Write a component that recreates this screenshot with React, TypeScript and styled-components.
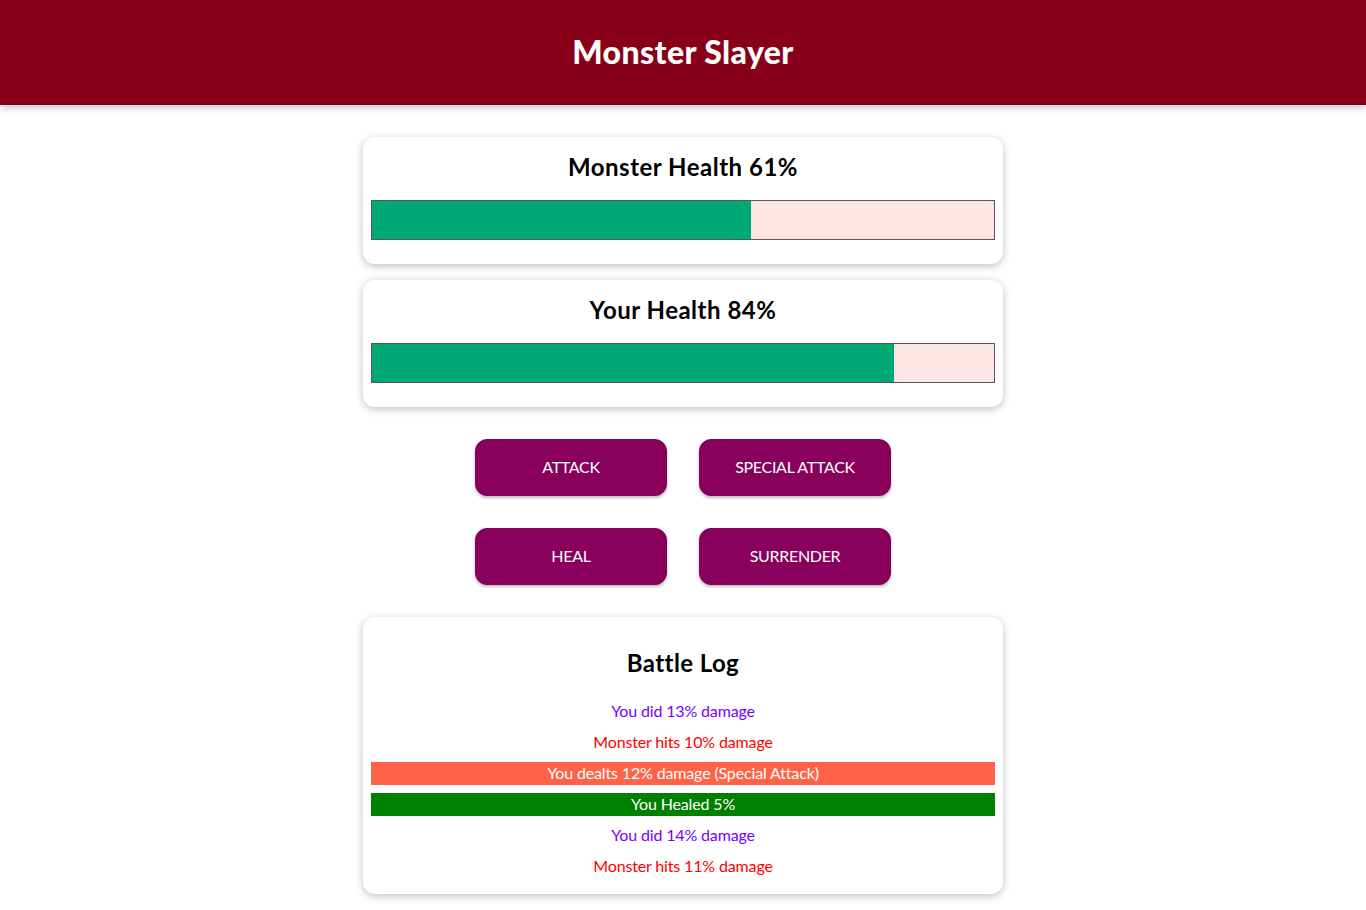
import React from 'react';
import styled, { createGlobalStyle } from 'styled-components';

const GlobalStyle = createGlobalStyle`
  * {
    box-sizing: border-box;
  }
  html {
    font-family: 'Lato', 'Noto Sans', sans-serif;
  }
  body {
    margin: 0;
    background: #ffffff;
  }
`;

const Header = styled.header`
  text-align: center;
  padding: 0.5rem;
  height: 105px;
  display: flex;
  align-items: center;
  justify-content: center;
  background-color: #880017;
  color: white;
  box-shadow: 0 2px 8px rgba(0, 0, 0, 0.26);
  margin-bottom: 2rem;
`;

const Title = styled.h1`
  margin: 0 0 2px;
  font-size: 32px;
  font-weight: 900;
  letter-spacing: 0.4px;
`;

const Section = styled.section`
  width: 90%;
  max-width: 40rem;
  margin: auto;
`;

const Container = styled.section`
  text-align: center;
  padding: 0.5rem;
  margin: 1rem auto;
  box-shadow: 0 2px 8px rgba(0, 0, 0, 0.26);
  border-radius: 12px;
  width: 90%;
  max-width: 40rem;
`;

const HealthTitle = styled.h2`
  margin: 0.25rem;
  font-size: 24px;
  line-height: 35px;
  font-weight: 700;
  letter-spacing: 0.5px;
`;

const HealthBar = styled.div`
  width: 100%;
  height: 40px;
  border: 1px solid #575757;
  margin: 1rem 0;
  background: #fde5e5;
`;

const HealthValue = styled.div`
  background-color: #00a876;
  height: 100%;
`;

const Controls = styled(Section)`
  display: flex;
  justify-content: center;
  flex-wrap: wrap;
`;

const Button = styled.button`
  font: inherit;
  font-size: 16px;
  line-height: 22px;
  border: 1px solid #88005b;
  background-color: #88005b;
  color: white;
  padding: 16px 2rem 17px;
  border-radius: 12px;
  margin: 1rem;
  width: 12rem;
  cursor: pointer;
  letter-spacing: -0.3px;
  box-shadow: 0 2px 3px rgba(0, 0, 0, 0.26);
`;

const LogTitle = styled.h2`
  margin: 20px 0;
  font-size: 24px;
  line-height: 35px;
  font-weight: 700;
  letter-spacing: 0.4px;
`;

const LogList = styled.ul`
  list-style: none;
  margin: 0;
  padding: 0;
`;

type Kind = 'player' | 'monster' | 'special' | 'heal';

const LogItem = styled.li<{ $kind: Kind }>`
  margin: 0.5rem 0;
  font-size: 16px;
  line-height: 22px;
  padding-bottom: 1px;
  font-weight: 400;
  letter-spacing: -0.15px;
  color: ${p =>
    p.$kind === 'player' ? '#7700ff' : p.$kind === 'monster' ? '#ff0000' : '#ffffff'};
  background: ${p =>
    p.$kind === 'special' ? '#ff6347' : p.$kind === 'heal' ? '#008000' : 'transparent'};
`;

const logs: { kind: Kind; text: string }[] = [
  { kind: 'player', text: 'You did 13% damage' },
  { kind: 'monster', text: 'Monster hits 10% damage' },
  { kind: 'special', text: 'You dealts 12% damage (Special Attack)' },
  { kind: 'heal', text: 'You Healed 5%' },
  { kind: 'player', text: 'You did 14% damage' },
  { kind: 'monster', text: 'Monster hits 11% damage' },
];

const Health = ({ label, value }: { label: string; value: number }) => (
  <Container>
    <HealthTitle>
      {label} {value}%
    </HealthTitle>
    <HealthBar>
      <HealthValue style={{ width: `${value}%` }} />
    </HealthBar>
  </Container>
);

const App = () => {
  return (
    <>
      <GlobalStyle />
      <Header>
        <Title>Monster Slayer</Title>
      </Header>
      <div>
        <Health label='Monster Health' value={61} />
        <Health label='Your Health' value={84} />
        <Controls>
          <Button>ATTACK</Button>
          <Button>SPECIAL ATTACK</Button>
          <Button>HEAL</Button>
          <Button>SURRENDER</Button>
        </Controls>
        <Container>
          <LogTitle>Battle Log</LogTitle>
          <LogList>
            {logs.map((log, i) => (
              <LogItem key={i} $kind={log.kind}>
                {log.text}
              </LogItem>
            ))}
          </LogList>
        </Container>
      </div>
    </>
  );
};

export default App;
